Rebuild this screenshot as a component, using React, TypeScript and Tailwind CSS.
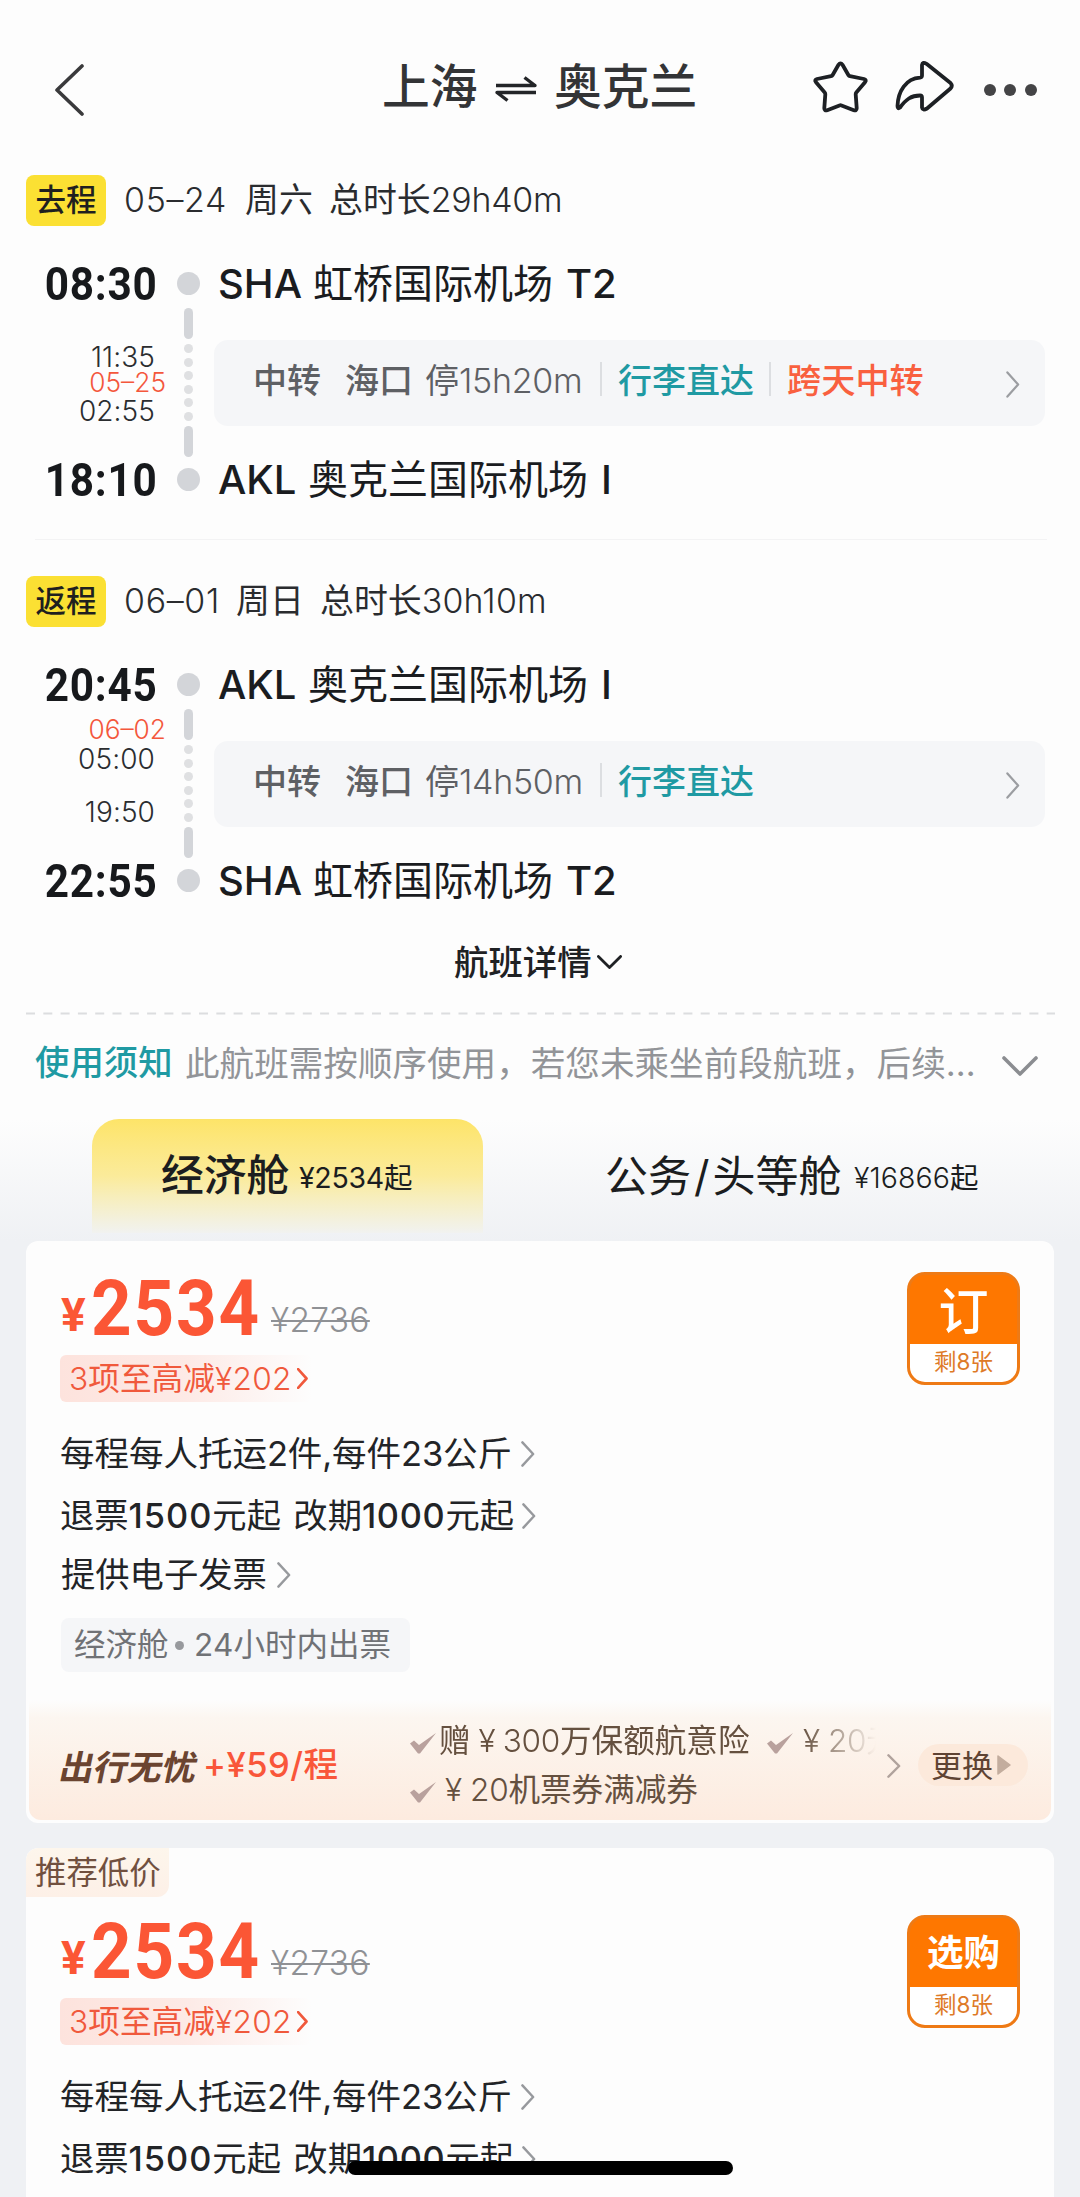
import type { ReactNode } from "react";

const SANS = "font-[Inter,'Noto_Sans_CJK_SC',sans-serif]";
const DIGITS = "font-[Roboto,'Noto_Sans_CJK_SC',sans-serif]";

type Box = { className?: string; children?: ReactNode };

/** Latin letters and digits set inside a Chinese line. */
function L({ className = "tracking-[-0.200px]", children }: Box) {
  return <span className={className}>{children}</span>;
}

function Chevron({ className = "", w = 2.6 }: { className?: string; w?: number }) {
  return (
    <svg className={`shrink-0 ${className}`} viewBox="0 0 15 28" preserveAspectRatio="none" fill="none" stroke="currentColor" strokeWidth={w} strokeLinecap="round" strokeLinejoin="round">
      <path d="M1.500 1.500 13 14 1.500 26.500" />
    </svg>
  );
}

function ChevronDown({ className = "", w = 3 }: { className?: string; w?: number }) {
  return (
    <svg className={`shrink-0 ${className}`} viewBox="0 0 36 20" fill="none" stroke="currentColor" strokeWidth={w} strokeLinecap="round" strokeLinejoin="round">
      <path d="M2 2l16 16L34 2" />
    </svg>
  );
}

function Header() {
  return (
    <header className="flex h-[174px] items-start pt-[60px]">
      <svg className="ml-[54px] mt-[4px] h-[52px] w-[32px] shrink-0" viewBox="0 0 32 52" fill="none" stroke="#3a3a3c" strokeWidth="3.6" strokeLinecap="round" strokeLinejoin="round">
        <path d="M28 2 3 26l25 24" />
      </svg>
      <div className="ml-[296px] flex h-[56px] w-[319px] items-center text-[47.800px] font-medium leading-none text-[#333436]">
        <span className="w-[113px] shrink-0">上海</span>
        <svg className="mt-[1px] h-[28px] w-[42px] shrink-0" viewBox="0 0 42 28" fill="none" stroke="#232528" strokeWidth="3.4" strokeLinejoin="round">
          <path d="M1 10.500h39L29.500 2.500M41 17.500H2l10.500 8" />
        </svg>
        <span className="ml-[17px] shrink-0">奥克兰</span>
      </div>
      <svg className="ml-[110px] h-[54px] w-[59px] shrink-0" viewBox="0 0 59 54" fill="none" stroke="#1d2024" strokeWidth="3.800" strokeLinejoin="round">
        <path d="M27.500 4.800Q29.500 1.800 31.500 4.800L37.500 15.200Q38 16 39 16.200L53 19Q56 20 54 22.300L45.300 32.500Q44.600 33.300 44.700 34.400L45.700 48.200Q45.600 51.200 42.800 50.200L30.500 45.400Q29.500 45 28.500 45.400L16.200 50.200Q13.400 51.200 13.300 48.200L14.300 34.400Q14.400 33.300 13.700 32.500L5 22.300Q3 20 6 19L20 16.200Q21 16 21.500 15.200Z" />
      </svg>
      <svg className="ml-[23px] mt-[-1px] h-[54px] w-[62px] shrink-0" viewBox="0 0 62 54" fill="none" stroke="#1d2024" strokeWidth="3.800" strokeLinejoin="round">
        <path d="M29 6Q29.500 2.500 33.500 4.800L57.500 24Q60 26.800 57.500 29.500L34 49.500Q29.500 52 29 48.500V38.500Q29 36.500 27 36.500C18 36.500 13 40.500 7 48.500Q4.500 50.500 4.500 47C5 32 13 19.500 27 18.600Q29 18.400 29 16.500Z" />
      </svg>
      <div className="ml-[29px] mt-[24px] flex gap-[8.300px]">
        <i className="size-[12px] rounded-full bg-[#444446]" />
        <i className="size-[12px] rounded-full bg-[#444446]" />
        <i className="size-[12px] rounded-full bg-[#444446]" />
      </div>
    </header>
  );
}

function Rail() {
  return (
    <div className="flex w-[24px] shrink-0 flex-col items-center pt-[12px]">
      <i className="size-[23px] rounded-full bg-[#d3d5d9]" />
      <i className="mt-[13px] h-[31px] w-[9px] rounded-full bg-[#d3d5d9]" />
      <div className="mt-[5px] flex flex-col gap-[4.600px]">
        {[0, 1, 2, 3, 4, 5].map((n) => (
          <i key={n} className="size-[9px] rounded-full bg-[#dfe0e2]" />
        ))}
      </div>
      <i className="mt-[5px] h-[31px] w-[9px] rounded-full bg-[#d3d5d9]" />
      <i className="mt-[11px] size-[23px] rounded-full bg-[#d3d5d9]" />
    </div>
  );
}

function Airport({ code, codeW, name, term }: { code: string; codeW: string; name: string; term: string }) {
  return (
    <div className="flex h-[48px] items-center text-[40px] leading-none text-[#1a1c1f]">
      <span className={`shrink-0 text-[40px] font-medium ${codeW}`}>{code}</span>
      <span className="shrink-0">{name}</span>
      <span className="ml-[13px] shrink-0 text-[40px] font-medium">{term}</span>
    </div>
  );
}

type LegProps = {
  tag: string; date: string; day: string; dateW: string; dayW: string; total: string; totalCls: string;
  depart: string; arrive: string; from: ReactNode; to: ReactNode; mid: ReactNode;
  stop: string; overnight?: boolean;
};

const clock = "flex h-[48px] origin-right scale-x-92 items-center text-[46px] font-bold leading-none tracking-[0.800px] text-[#17191c]";

function Leg(p: LegProps) {
  return (
    <section>
      <div className="flex h-[52px] items-center pl-[26px] leading-none">
        <span className="flex h-[51px] w-[80px] items-center justify-center rounded-[8px] bg-[#fbe033] text-[30.500px] font-medium text-[#1f1f1f]">{p.tag}</span>
        <div className="ml-[18px] flex text-[33.900px] text-[#2a2c2f]">
          <span className={`shrink-0 font-[350] tracking-[0.700px] ${p.dateW}`}>{p.date}</span>
          <span className={`shrink-0 ${p.dayW}`}>{p.day}</span>
          <span className="shrink-0">总时长<L className={`font-[350] ${p.totalCls}`}>{p.total}</L></span>
        </div>
      </div>
      <div className="mt-[34px] flex h-[250px]">
        <div className="flex w-[158px] shrink-0 flex-col items-end">
          <div className={`${clock} ${DIGITS}`}>{p.depart}</div>
          <div className="h-[148px] w-full">{p.mid}</div>
          <div className={`${clock} ${DIGITS}`}>{p.arrive}</div>
        </div>
        <div className="ml-[18.500px] flex"><Rail /></div>
        <div className="ml-[13.500px] w-[831px]">
          <div className="pl-[4px]">{p.from}</div>
          <div className="mt-[32px] flex h-[86px] items-center rounded-[14px] bg-[#f5f6f8] pb-[4px] pl-[39px] pr-[25px] text-[34px] leading-none text-[#5e6064]">
            <span className="w-[92px] shrink-0 font-medium">中转</span>
            <span className="w-[80px] shrink-0 font-medium">海口</span>
            <span className="w-[175px] shrink-0 whitespace-nowrap">停<L className="font-[350] tracking-[-0.300px]">{p.stop}</L></span>
            <i className="mb-[5px] h-[34px] w-[2px] shrink-0 bg-[#dcdee1]" />
            <span className="ml-[16px] shrink-0 font-medium text-[#1f9aa3]">行李直达</span>
            {p.overnight && (
              <>
                <i className="mb-[5px] ml-[15px] h-[34px] w-[2px] shrink-0 bg-[#dcdee1]" />
                <span className="ml-[16px] shrink-0 text-[34.200px] font-medium text-[#f9603f]">跨天中转</span>
              </>
            )}
            <Chevron className="ml-auto mt-[6px] h-[27px] w-[14px] text-[#9b9da1]" w={2.400} />
          </div>
          <div className="mt-[30px] pl-[4px]">{p.to}</div>
        </div>
      </div>
    </section>
  );
}

const mini = "flex items-center justify-end text-[28px] leading-none font-[350] text-[#2b2d30] tracking-[0.100px]";
const miniRed = "flex items-center justify-end mr-[-11px] text-[26.300px] leading-none font-[350] text-[#f4573c]";

function Amenity({ children, className = "" }: Box) {
  return (
    <div className={`flex shrink-0 items-center ${className}`}>
      <svg className="mt-[4px] h-[22px] w-[28px] shrink-0" viewBox="0 0 28 22">
        <path d="M1 11.500 5 8.500l5 4.500L27 1 11 21.500H9z" fill="#b9a19d" />
      </svg>
      {children}
    </div>
  );
}

function Fare({ action, big }: { action: string; big?: boolean }) {
  return (
    <div className="flex justify-between px-[34px]">
      <div>
        <div className="flex h-[70px] items-end leading-none">
          <span className={`mb-[3px] ml-[1px] w-[30px] text-[46px] font-bold text-[#fb5635] ${DIGITS}`}>¥</span>
          <span className={`mb-[-3px] w-[180px] origin-left scale-x-92 text-[77px] font-bold leading-[70px] tracking-[2px] text-[#fb5635] ${DIGITS}`}>2534</span>
          <span className="mb-[4px] text-[33.500px] font-[350] tracking-[0.300px] text-[#8f9195] line-through decoration-[2px]">¥2736</span>
        </div>
        <div className="mt-[14px] flex h-[47px] w-[252px] items-center rounded-[6px] bg-linear-to-r from-[#fde3dd] via-[#fdeae6] to-[#fdfdfd] pl-[9px] text-[31.700px] leading-none text-[#f0593c]">
          <span className="w-[228px] shrink-0"><L className="font-[350]">3</L>项至高减<L className="font-[350] tracking-[0.300px]">¥202</L></span>
          <Chevron className="h-[21px] w-[11px]" w={3.600} />
        </div>
        <div className="mt-[32px] flex h-[40px] items-center text-[34.500px] leading-none text-[#222427]">
          <span className="w-[461px] shrink-0 whitespace-nowrap">每程每人托运<L>2</L>件<L>,</L>每件<L>23</L>公斤</span>
          <Chevron className="h-[26px] w-[14px] text-[#97999d]" />
        </div>
        <div className="mt-[22px] flex h-[40px] items-center text-[34.300px] leading-none text-[#222427]">
          <span className="flex w-[462px] shrink-0">
            <span>退票<L className="font-medium tracking-[1px]">1500</L>元起</span>
            <span className="ml-auto mr-[8px]">改期<L className="font-medium tracking-[0.700px]">1000</L>元起</span>
          </span>
          <Chevron className="h-[26px] w-[14px] text-[#97999d]" />
        </div>
      </div>
      <button className="mt-[1px] flex h-[113px] w-[113px] shrink-0 flex-col overflow-hidden rounded-[18px] border-[3px] border-[#ee7a15] bg-[#fe7700]">
        <span className={`flex h-[69px] w-full shrink-0 items-center justify-center leading-none text-white ${big ? "pt-[4px] text-[50px] font-medium" : "pt-[2px] text-[36.500px] font-bold"}`}>{action}</span>
        <span className="flex w-full grow items-center justify-center bg-white pb-[2px] text-[22.500px] leading-none text-[#de7a27]">剩8张</span>
      </button>
    </div>
  );
}

export default function App() {
  return (
    <main className={`relative h-[2197px] w-[1080px] overflow-hidden bg-[#fdfdfd] ${SANS}`}>
      <Header />
      <Leg
        tag="去程" date="05–24" dateW="w-[121px]" day="周六" dayW="w-[84px]" total="29h40m" totalCls="tracking-[-0.200px]"
        depart="08:30" arrive="18:10" stop="15h20m" overnight
        from={<Airport code="SHA" codeW="w-[95px]" name="虹桥国际机场" term="T2" />}
        to={<Airport code="AKL" codeW="w-[90px]" name="奥克兰国际机场" term="I" />}
        mid={
          <div className="flex flex-col pr-[3px] pt-[36px]">
            <div className={`h-[26px] ${mini}`}>11:35</div>
            <div className={`h-[27px] ${miniRed}`}>05–25</div>
            <div className={`h-[27px] ${mini}`}>02:55</div>
          </div>
        }
      />
      <div className="ml-[35px] mt-[29px] h-px w-[1012px] bg-[#f3f3f4]" />
      <div className="h-[35px]" />
      <Leg
        tag="返程" date="06–01" dateW="w-[112px]" day="周日" dayW="w-[84px]" total="30h10m" totalCls="tracking-[0.200px]"
        depart="20:45" arrive="22:55" stop="14h50m"
        from={<Airport code="AKL" codeW="w-[90px]" name="奥克兰国际机场" term="I" />}
        to={<Airport code="SHA" codeW="w-[95px]" name="虹桥国际机场" term="T2" />}
        mid={
          <div className="flex flex-col pr-[3px] pt-[8px]">
            <div className={`h-[26px] ${miniRed}`}>06–02</div>
            <div className={`h-[31px] ${mini}`}>05:00</div>
            <div className={`mt-[22px] h-[31px] ${mini}`}>19:50</div>
          </div>
        }
      />

      <div className="mt-[32px] flex h-[40px] items-center pl-[454px] text-[34.400px] font-medium leading-none text-[#1f2124]">
        航班详情
        <ChevronDown className="mb-[3px] ml-[5px] h-[14px] w-[25px]" w={4} />
      </div>
      <svg className="ml-[26px] mt-[29px] block h-[3px] w-[1029px]" viewBox="0 0 1029 3">
        <path d="M0 1.500H1029" stroke="#dcdddf" strokeWidth="2" strokeDasharray="9 8.300" />
      </svg>
      <div className="mt-[28px] flex h-[40px] items-center pl-[35px] text-[34.600px] leading-none">
        <span className="w-[150px] shrink-0 text-[34.400px] font-medium text-[#1f9aa3]">使用须知</span>
        <span className="w-[817px] shrink-0 whitespace-nowrap text-[#929498]">此航班需按顺序使用，若您未乘坐前段航班，后续…</span>
        <ChevronDown className="mt-[6px] h-[20px] w-[36px] text-[#8b8d91]" w={3.600} />
      </div>

      <div className="mt-[36px] flex h-[122px] bg-linear-to-b from-[#fdfdfd] to-[#eff1f4] pl-[92px]">
        <div className="flex h-[114px] w-[391px] items-center rounded-t-[27px] bg-linear-to-b from-[#fde468] via-[#fbeb9a] to-[#f1f2f0] pl-[69px] leading-none text-[#1b1d20]">
          <span className="w-[138px] shrink-0 text-[42.800px] font-medium">经济舱</span>
          <span className="mt-[4px] text-[28.500px]"><L className="tracking-[-0.300px]">¥2534</L>起</span>
        </div>
        <div className="flex h-[114px] items-center pl-[122px] leading-none text-[#1b1d20]">
          <span className="w-[249px] shrink-0 text-[43px]">公务<span className="mx-[3px]">/</span>头等舱</span>
          <span className="mt-[4px] text-[28.500px]"><L className="font-[350] tracking-[0.100px]">¥16866</L>起</span>
        </div>
      </div>

      <div className="h-[956px] bg-[#eff1f4] px-[26px]">
        <article className="h-[582px] overflow-hidden rounded-[12px] bg-[#fdfdfd] pt-[30px]">
          <Fare action="订" big />
          <div className="mt-[19px] flex h-[40px] items-center pl-[35px] text-[34.300px] leading-none text-[#222427]">
            <span className="w-[216px] shrink-0">提供电子发票</span>
            <Chevron className="h-[26px] w-[14px] text-[#97999d]" />
          </div>
          <div className="ml-[35px] mt-[23px] flex h-[54px] w-[349px] items-center rounded-[8px] bg-[#f5f6f8] pl-[13px] text-[31.500px] leading-none text-[#707276]">
            <span className="w-[101px] shrink-0">经济舱</span>
            <i className="mr-[10px] size-[9px] rounded-full bg-[#97999d]" />
            <span><L className="tracking-[0.200px]">24</L>小时内出票</span>
          </div>
          <div className="mx-[3px] mt-[28px] flex h-[120px] rounded-b-[12px] bg-linear-to-b from-[#fdfdfd] from-0% via-[#fcf6f0] via-15% to-[#fdebdf] pl-[31px] leading-none">
            <div className="flex w-[143px] shrink-0 pt-[51px] text-[34.300px] font-bold text-[#6b4430]">
              <span className="inline-block h-[36px] -skew-x-12">出行无忧</span>
            </div>
            <div className="w-[206px] shrink-0 pt-[48px] text-[34.500px] font-medium text-[#f9563a]"><L className="tracking-[0.500px]">+¥59/</L>程</div>
            <div className="w-[467px] shrink-0 pt-[18px] text-[31.600px] text-[#65503f]">
              <div className="flex h-[46px] w-[467px] overflow-hidden mask-r-from-84% mask-r-to-100%">
                <Amenity className="w-[357px]"><span className="ml-[2px] whitespace-pre">赠<L className="mx-[8px] font-[350] tracking-[-1px]">¥</L><L className="font-[350] tracking-[-0.300px]">300</L>万保额航意险</span></Amenity>
                <Amenity><span className="ml-[9px] whitespace-nowrap"><L className="mr-[8px] font-[350]">¥</L><L className="font-[350] tracking-[-0.500px]">20</L>元</span></Amenity>
              </div>
              <Amenity className="mt-[3px] h-[46px]"><span className="ml-[8px]"><L className="mr-[8px] font-[350]">¥</L><L className="font-[350] tracking-[-0.300px]">20</L>机票券满减券</span></Amenity>
            </div>
            <Chevron className="ml-[11px] mt-[54px] h-[24px] w-[14px] text-[#b0a29c]" />
            <div className="ml-[17px] mt-[44px] flex h-[42px] w-[110px] items-center rounded-full bg-[#fce9db] pl-[13px] text-[31px] text-[#5f4333]">
              更换
              <svg className="ml-[4px] h-[20px] w-[14px]" viewBox="0 0 14 20"><path d="M1 1 13 10 1 19z" fill="#c3ad9e" stroke="#c3ad9e" strokeWidth="1.500" strokeLinejoin="round" /></svg>
            </div>
          </div>
        </article>

        <article className="mt-[25px] h-[360px] overflow-hidden rounded-t-[12px] bg-[#fdfdfd]">
          <div className="mb-[17px] flex h-[49px] w-[143px] items-center rounded-br-[12px] rounded-tl-[12px] bg-linear-to-b from-[#fdf6ec] to-[#fdf0e7] pl-[9px] pt-[2px] text-[31.400px] leading-none text-[#71503f]">推荐低价</div>
          <Fare action="选购" />
        </article>
      </div>
      <div className="absolute left-[348px] top-[2161px] h-[14px] w-[385px] rounded-full bg-black" />
    </main>
  );
}
